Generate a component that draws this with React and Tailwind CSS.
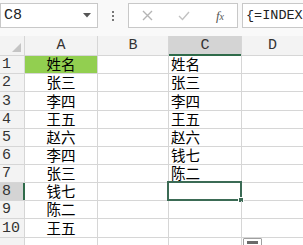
import React from "react";

const rows = [
  ["姓名", "姓名"],
  ["张三", "张三"],
  ["李四", "李四"],
  ["王五", "王五"],
  ["赵六", "赵六"],
  ["李四", "钱七"],
  ["张三", "陈二"],
  ["钱七", ""],
  ["陈二", ""],
  ["王五", ""],
];
const heights = ["h-[18px]", "h-[18px]", "h-[19px]", "h-[18px]", "h-[18px]", "h-[18px]", "h-[18px]", "h-[18px]", "h-[18px]", "h-[19px]"];

const mono = { fontFamily: '"Liberation Mono", "DejaVu Sans Mono", monospace' };
const cjk = { fontFamily: '"Noto Sans CJK SC", "Noto Sans", sans-serif' };

export default function App() {
  return (
    <div className="w-[303px] h-[245px] overflow-hidden bg-white relative">
      {/* toolbar */}
      <div className="h-[36px] flex items-start pt-[3px] bg-[#f9f9f9]">
        <div className="w-[98px] h-[25px] border border-[#c8c8c8] bg-white flex items-center justify-between pl-[3px] pr-[6px]">
          <span className="text-[15px] leading-none text-[#222]" style={mono}>C8</span>
          <svg width="8" height="5" viewBox="0 0 8 5"><path d="M0 0 L8 0 L4 4.5 Z" fill="#555" /></svg>
        </div>
        <div className="w-[30px] h-[25px] flex flex-col items-center justify-center gap-[2px]">
          <div className="w-[2px] h-[2px] bg-[#777]" />
          <div className="w-[2px] h-[2px] bg-[#777]" />
          <div className="w-[2px] h-[2px] bg-[#777]" />
        </div>
        <div className="w-[110px] h-[25px] border border-[#c8c8c8] bg-white flex items-center">
          <div className="w-[36px] flex justify-center">
            <svg width="11" height="11" viewBox="0 0 11 11"><path d="M1 1 L10 10 M10 1 L1 10" stroke="#b5b5b5" strokeWidth="1.4" /></svg>
          </div>
          <div className="w-[38px] flex justify-center">
            <svg width="12" height="10" viewBox="0 0 12 10"><path d="M1 5 L4.5 8.5 L11 1" stroke="#c2c2c2" strokeWidth="1.4" fill="none" /></svg>
          </div>
          <div className="flex-1 flex justify-center">
            <span className="text-[13px] leading-none italic text-[#555]" style={{ fontFamily: '"Liberation Serif", serif' }}>f<span className="text-[10px]">x</span></span>
          </div>
        </div>
        <div className="w-[4px]" />
        <div className="flex-1 h-[25px] border border-r-0 border-[#c8c8c8] bg-white flex items-center pl-[3px] overflow-hidden whitespace-nowrap">
          <span className="text-[13.5px] leading-none text-[#222]" style={mono}>{"{=INDEX"}</span>
        </div>
      </div>

      {/* column headers */}
      <div className="flex h-[20px] bg-[#f3f3f3] border-b border-[#d6d6d6] text-[15px] leading-none text-[#333]" style={mono}>
        <div className="w-[25px] border-r border-[#d6d6d6] relative">
          <svg className="absolute right-[3px] bottom-[3px]" width="9" height="9" viewBox="0 0 9 9"><path d="M9 0 L9 9 L0 9 Z" fill="#c4c4c4" /></svg>
        </div>
        <div className="w-[73px] border-r border-[#d6d6d6] flex items-center justify-center">A</div>
        <div className="w-[71px] border-r border-[#d6d6d6] flex items-center justify-center">B</div>
        <div className="w-[73px] border-r border-[#d6d6d6] bg-[#d4d4d4] flex items-center justify-center relative">
          C
          <div className="absolute left-0 right-0 -bottom-[1px] h-[2px] bg-[#2f6b4a]" />
        </div>
        <div className="flex-1 flex items-center justify-center">D</div>
      </div>

      {/* rows */}
      {rows.map((r, i) => (
        <div key={i} className={`flex ${heights[i]} border-b border-[#d6d6d6]`}>
          <div
            className={`w-[25px] border-r border-[#d6d6d6] flex items-center pl-[2px] text-[15px] leading-none text-[#333] relative ${i === 7 ? "bg-[#d4d4d4]" : "bg-[#f3f3f3]"}`}
            style={mono}
          >
            {i + 1}
            {i === 7 && <div className="absolute top-0 bottom-0 -right-[1px] w-[2px] bg-[#2f6b4a]" />}
          </div>
          <div
            className={`w-[73px] border-r border-[#d6d6d6] flex items-center justify-center text-[14.5px] leading-none text-black ${i === 0 ? "bg-[#92cf50]" : ""}`}
            style={cjk}
          >
            {r[0]}
          </div>
          <div className="w-[71px] border-r border-[#d6d6d6]" />
          <div className="w-[73px] border-r border-[#d6d6d6] flex items-center pl-[2px] text-[14.5px] leading-none text-black relative" style={cjk}>
            {r[1]}
            {i === 7 && (
              <div className="absolute -left-[2px] -top-[2px] -right-[1px] -bottom-[1px] border-2 border-[#3b6b55]">
                <div className="absolute -right-[4px] -bottom-[4px] w-[6px] h-[6px] bg-[#3b6b55] border border-white" />
              </div>
            )}
          </div>
          <div className="flex-1" />
        </div>
      ))}
      <div className="flex h-[10px]">
        <div className="w-[25px] border-r border-[#d6d6d6] bg-[#f3f3f3]" />
        <div className="w-[73px] border-r border-[#d6d6d6]" />
        <div className="w-[71px] border-r border-[#d6d6d6]" />
        <div className="w-[73px] border-r border-[#d6d6d6]" />
        <div className="flex-1" />
      </div>

      {/* quick analysis button */}
      <div className="absolute left-[243px] top-[238px] w-[19px] h-[12px] border border-[#a0a0a0] bg-white rounded-[1px] flex justify-center pt-[2px]">
        <div className="w-[11px] h-[3px] bg-[#6a6a6a]" />
      </div>
    </div>
  );
}
